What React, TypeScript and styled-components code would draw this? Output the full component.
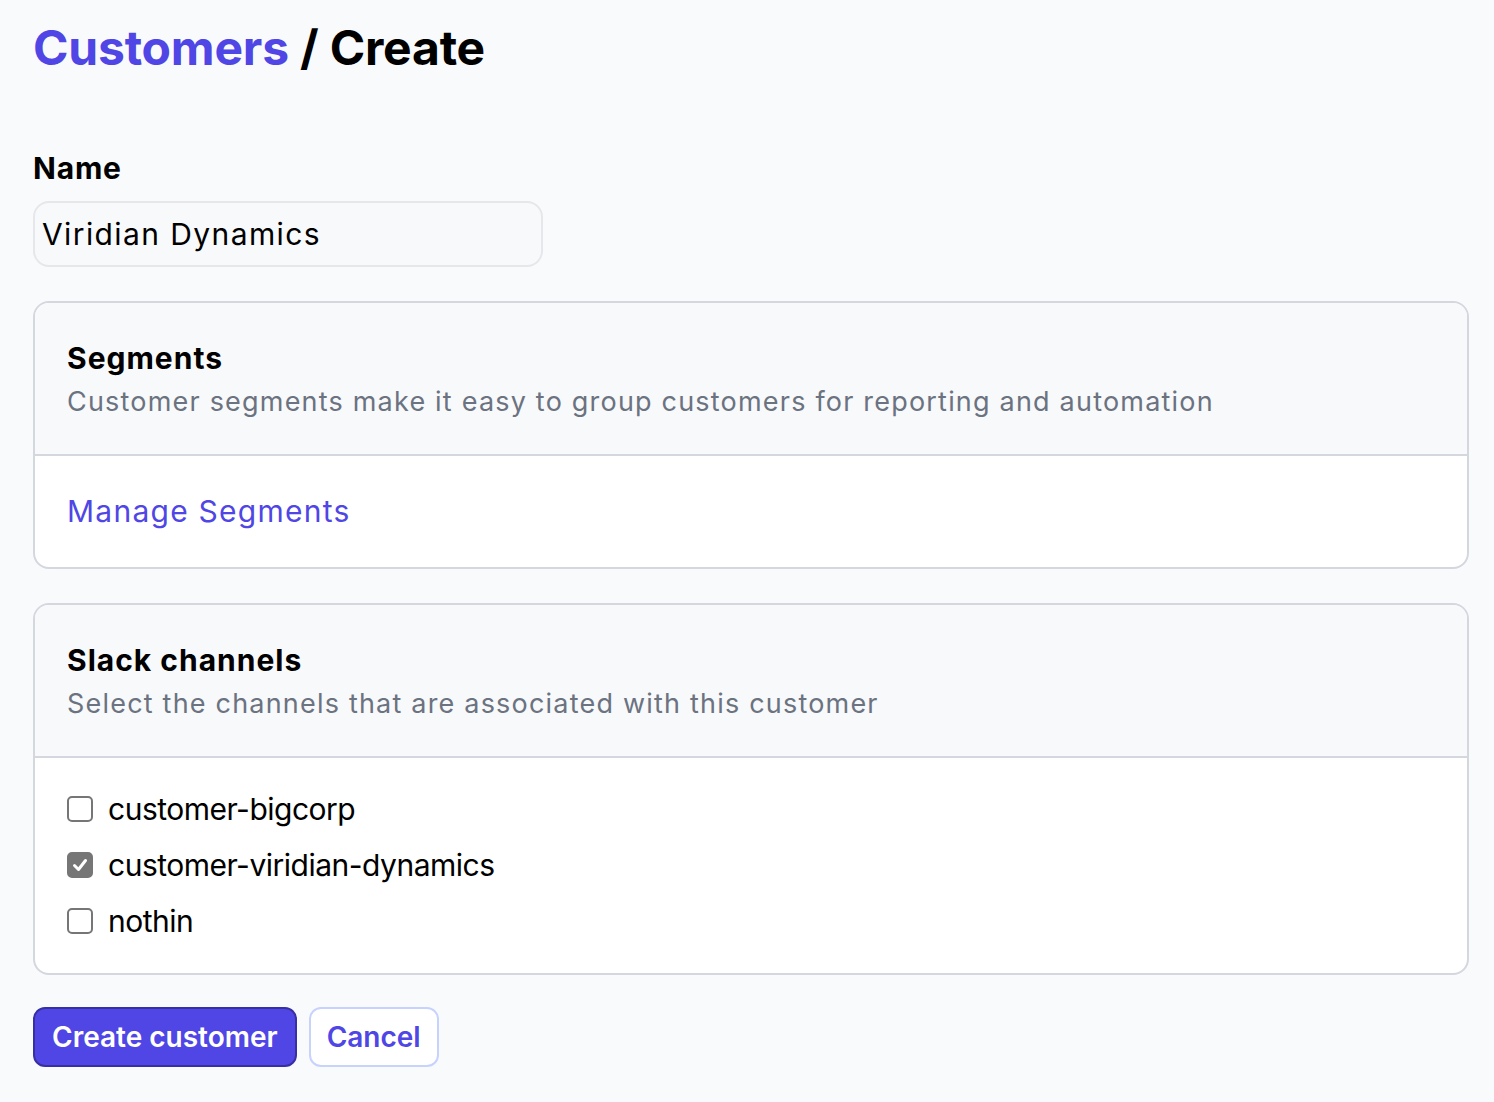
import styled, { createGlobalStyle } from "styled-components";

const GlobalStyle = createGlobalStyle`
  body {
    margin: 0;
    background: #f9fafb;
    font-family: Inter, "Open Sans", sans-serif;
    color: #000;
  }
`;

const Page = styled.div`
  padding: 16px 25px 40px 33px;
  display: flex;
  flex-direction: column;
`;

const Title = styled.h1`
  margin: 0;
  font-size: 48px;
  line-height: 64px;
  font-weight: 700;
  letter-spacing: -0.2px;
`;

const Crumb = styled.span`
  color: #4f46e5;
`;

const Label = styled.label`
  margin-top: 68px;
  font-size: 30px;
  line-height: 40px;
  font-weight: 700;
  letter-spacing: 0.8px;
`;

const Input = styled.input`
  margin-top: 13px;
  width: 510px;
  height: 66px;
  box-sizing: border-box;
  padding: 0 7px;
  border: 2px solid #e5e7eb;
  border-radius: 16px;
  background: #f8f9fb;
  font-family: inherit;
  font-size: 30px;
  letter-spacing: 1.4px;
  color: #000;
  outline: none;
`;

const Card = styled.section`
  margin-top: 34px;
  border: 2px solid #d5d7de;
  border-radius: 16px;
  overflow: hidden;
  background: #fff;
`;

const CardHeader = styled.div`
  padding: 31px 32px 32px;
  background: #f8f9fb;
  border-bottom: 2px solid #d5d7de;
  display: flex;
  flex-direction: column;
`;

const CardTitle = styled.h2`
  margin: 0;
  font-size: 30px;
  line-height: 48px;
  font-weight: 700;
  letter-spacing: 1px;
`;

const CardText = styled.p`
  margin: 0;
  font-size: 27px;
  line-height: 40px;
  color: #6b7280;
  letter-spacing: 1.2px;
`;

const CardBody = styled.div<{ $gap?: number }>`
  padding: 31px 32px 32px;
  display: flex;
  flex-direction: column;
  gap: ${(p) => p.$gap ?? 0}px;
`;

const Link = styled.a`
  font-size: 30px;
  line-height: 48px;
  color: #4f46e5;
  text-decoration: none;
  letter-spacing: 1.25px;
`;

const Option = styled.label`
  display: flex;
  align-items: center;
  gap: 15px;
  font-size: 30px;
  line-height: 40px;
  letter-spacing: -0.5px;
`;

const Box = styled.span<{ $checked?: boolean }>`
  width: 26px;
  height: 26px;
  box-sizing: border-box;
  border-radius: 5px;
  border: 2px solid #767676;
  background: ${(p) => (p.$checked ? "#767676" : "#fff")};
  display: flex;
  align-items: center;
  justify-content: center;
`;

const Actions = styled.div`
  margin-top: 32px;
  display: flex;
  gap: 12px;
`;

const Button = styled.button<{ $primary?: boolean }>`
  height: 60px;
  padding: 0 ${(p) => (p.$primary ? 17 : 16)}px;
  border-radius: 12px;
  font-family: inherit;
  font-size: 28px;
  font-weight: 600;
  cursor: pointer;
  border: 2px solid ${(p) => (p.$primary ? "#3730a3" : "#c7d2fe")};
  background: ${(p) => (p.$primary ? "#4f46e5" : "#fff")};
  color: ${(p) => (p.$primary ? "#fff" : "#4f46e5")};
`;

const channels = [
  { name: "customer-bigcorp", checked: false },
  { name: "customer-viridian-dynamics", checked: true },
  { name: "nothin", checked: false },
];

export default function App() {
  return (
    <>
      <GlobalStyle />
      <Page>
        <Title>
          <Crumb>Customers</Crumb> / Create
        </Title>
        <Label>Name</Label>
        <Input defaultValue="Viridian Dynamics" />

        <Card>
          <CardHeader>
            <CardTitle>Segments</CardTitle>
            <CardText>
              Customer segments make it easy to group customers for reporting and automation
            </CardText>
          </CardHeader>
          <CardBody>
            <Link href="#">Manage Segments</Link>
          </CardBody>
        </Card>

        <Card>
          <CardHeader>
            <CardTitle>Slack channels</CardTitle>
            <CardText>Select the channels that are associated with this customer</CardText>
          </CardHeader>
          <CardBody $gap={16}>
            {channels.map((c) => (
              <Option key={c.name}>
                <Box $checked={c.checked}>
                  {c.checked && (
                    <svg width="18" height="18" viewBox="0 0 18 18">
                      <path
                        d="M3.5 9.5 L7.5 13.5 L14.5 4.5"
                        fill="none"
                        stroke="#fff"
                        strokeWidth="3"
                        strokeLinecap="round"
                        strokeLinejoin="round"
                      />
                    </svg>
                  )}
                </Box>
                {c.name}
              </Option>
            ))}
          </CardBody>
        </Card>

        <Actions>
          <Button $primary>Create customer</Button>
          <Button>Cancel</Button>
        </Actions>
      </Page>
    </>
  );
}
